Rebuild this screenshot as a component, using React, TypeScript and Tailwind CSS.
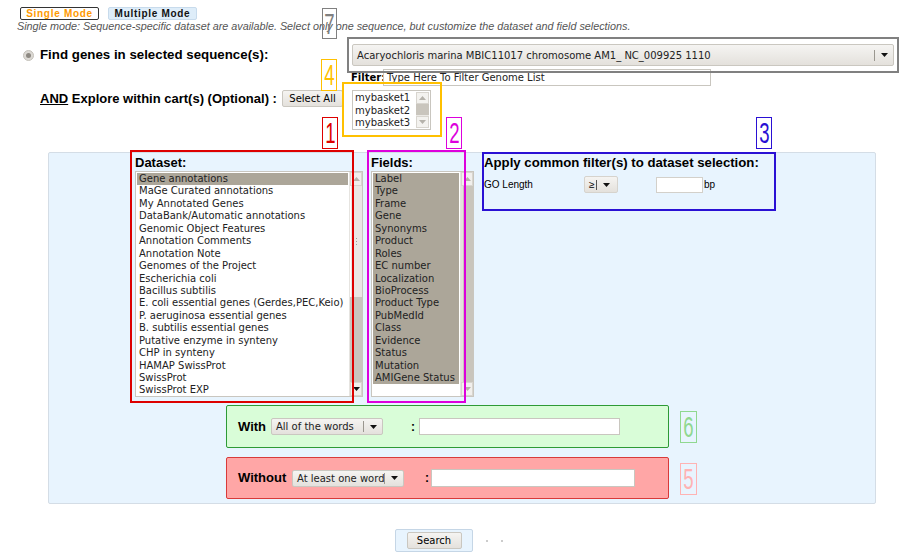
import React from 'react';

const datasets = [
    'Gene annotations',
    'MaGe Curated annotations',
    'My Annotated Genes',
    'DataBank/Automatic annotations',
    'Genomic Object Features',
    'Annotation Comments',
    'Annotation Note',
    'Genomes of the Project',
    'Escherichia coli',
    'Bacillus subtilis',
    'E. coli essential genes (Gerdes,PEC,Keio)',
    'P. aeruginosa essential genes',
    'B. subtilis essential genes',
    'Putative enzyme in synteny',
    'CHP in synteny',
    'HAMAP SwissProt',
    'SwissProt',
    'SwissProt EXP',
];

const fields = [
    'Label', 'Type', 'Frame', 'Gene', 'Synonyms', 'Product', 'Roles', 'EC number', 'Localization',
    'BioProcess', 'Product Type', 'PubMedId', 'Class', 'Evidence', 'Status', 'Mutation', 'AMIGene Status',
];

const DownArrow = ({ light = false }: { light?: boolean }) => (
    <svg width="7" height="4" viewBox="0 0 7 4">
        <polygon points="0,0 7,0 3.5,4" fill={light ? '#b5b2ab' : '#111'} />
    </svg>
);

const UpArrow = ({ light = false }: { light?: boolean }) => (
    <svg width="7" height="4" viewBox="0 0 7 4">
        <polygon points="0,4 7,4 3.5,0" fill={light ? '#b5b2ab' : '#111'} />
    </svg>
);

// grey "combo" used for the drop downs
const Combo = ({ text, className }: { text: string; className: string }) => (
    <div className={`flex items-center border border-[#cac7c0] bg-gradient-to-b from-[#f5f4f2] to-[#e4e1dc] rounded-[2px] font-['DejaVu_Sans',sans-serif] text-[10px] text-[#222] ${className}`}>
        <span className="flex-1 pl-[4px] whitespace-nowrap overflow-hidden">{text}</span>
        <span className="w-px h-[11px] bg-[#9a978f]" />
        <span className="w-[18px] flex justify-center"><DownArrow /></span>
    </div>
);

// annotation frame with number
const Tag = ({ n, className }: { n: string; className: string }) => (
    <div className={`absolute flex items-center justify-center border font-['Liberation_Sans',Arial,sans-serif] text-[30px] leading-none ${className}`}>
        <span className="scale-x-[0.62] inline-block">{n}</span>
    </div>
);

export default function App() {
    return (
        <div className="relative w-[900px] h-[560px] overflow-hidden bg-white font-['Liberation_Sans',Arial,sans-serif] text-black">
            {/* mode switch */}
            <div className="flex gap-[9px] pt-[7px] pl-[20px]">
                <div className="h-[13px] w-[79px] flex items-center justify-center border border-[#333] rounded-[2px] bg-white text-[10px] font-bold tracking-[0.7px] text-[#ff9900]">
                    Single Mode
                </div>
                <div className="h-[13px] w-[89px] flex items-center justify-center border border-[#c8dbec] rounded-[2px] bg-[#deedf9] text-[10px] font-bold tracking-[0.7px] text-[#111]">
                    Multiple Mode
                </div>
            </div>
            <div className="h-[12px] leading-[12px] pl-[17px] text-[10.8px] italic text-[#555] whitespace-nowrap">
                Single mode: Sequence-specific dataset are available. Select only one sequence, but customize the dataset and field selections.
            </div>

            {/* sequence */}
            <div className="flex mt-[12px] h-[22px]">
                <div className="w-[352px] flex items-center pl-[23px] gap-[6px]">
                    <span className="w-[11px] h-[11px] rounded-full bg-[#dcd9d4] border border-[#c4c1ba] flex items-center justify-center">
                        <span className="w-[5px] h-[5px] rounded-full bg-[#8d8982]" />
                    </span>
                    <span className="text-[13.3px] font-bold">Find genes in selected sequence(s):</span>
                </div>
                <Combo text="Acaryochloris marina MBIC11017 chromosome AM1_ NC_009925 1110" className="w-[542px] h-[22px]" />
            </div>
            <div className="flex items-center mt-[3px] h-[17px] pl-[351px] font-['DejaVu_Sans',sans-serif] text-[10px]">
                <span className="font-bold w-[32px]">Filter:</span>
                <div className="w-[328px] h-[17px] border border-[#c9c6bf] bg-white flex items-center pl-[3px] text-[#222]">
                    Type Here To Filter Genome List
                </div>
            </div>

            {/* carts */}
            <div className="flex mt-[4px] h-[40px]">
                <div className="w-[343px] flex items-start pl-[40px]">
                    <span className="flex-1 text-[13px] font-bold leading-[17px]">
                        <span className="underline">AND</span> Explore within cart(s) (Optional) :
                    </span>
                    <div className="w-[61px] h-[17px] border border-[#cac7c0] bg-gradient-to-b from-[#f5f4f2] to-[#e4e1dc] rounded-[2px] flex items-center justify-center font-['DejaVu_Sans',sans-serif] text-[10px]">
                        Select All
                    </div>
                </div>
                <div className="ml-[9px] w-[79px] h-[40px] border border-[#c9c6bf] bg-white flex font-['DejaVu_Sans',sans-serif] text-[10px] text-[#222]">
                    <div className="flex-1 pl-[2px] pt-[1px] leading-[12.5px]">
                        <div>mybasket1</div>
                        <div>mybasket2</div>
                        <div>mybasket3</div>
                    </div>
                    <div className="w-[13px] my-[1px] mr-px flex flex-col bg-[#ebe9e5]">
                        <div className="h-[12px] flex items-center justify-center border border-[#d8d5cf] bg-[#f3f2ef]"><UpArrow light /></div>
                        <div className="h-[11px] bg-[#c9c5bd]" />
                        <div className="flex-1" />
                        <div className="h-[12px] flex items-center justify-center border border-[#d8d5cf] bg-[#f3f2ef]"><DownArrow light /></div>
                    </div>
                </div>
            </div>

            {/* main panel */}
            <div className="mt-[22px] ml-[48px] w-[828px] h-[352px] border border-[#d4dde6] rounded-[2px] bg-[#e8f4fe]">
                <div className="flex pl-[86px] pt-[2px]">
                    {/* dataset */}
                    <div className="w-[228px]">
                        <div className="h-[16px] leading-[16px] text-[13px] font-bold">Dataset:</div>
                        <div className="h-[226px] border border-[#c9c6bf] bg-white flex font-['DejaVu_Sans',sans-serif] text-[10px] text-[#222]">
                            <div className="flex-1 p-px">
                                {datasets.map((d, i) => (
                                    <div key={d} className={`h-[12.45px] leading-[12.45px] pl-[2px] whitespace-nowrap ${i === 0 ? 'bg-[#aca699]' : ''}`}>{d}</div>
                                ))}
                            </div>
                            <div className="w-[13px] flex flex-col bg-[#c9c5bd] border-l border-[#e6e4e0]">
                                <div className="h-[14px] flex items-center justify-center border border-[#d8d5cf] bg-[#f1efec]"><UpArrow light /></div>
                                <div className="h-[111px] bg-[#eae8e4] border-l border-white flex items-center justify-center">
                                    <div className="flex flex-col gap-[2px]">
                                        <span className="w-px h-px bg-[#a09d96]" />
                                        <span className="w-px h-px bg-[#a09d96]" />
                                        <span className="w-px h-px bg-[#a09d96]" />
                                    </div>
                                </div>
                                <div className="flex-1" />
                                <div className="h-[14px] flex items-center justify-center border border-[#d8d5cf] bg-[#f1efec]"><DownArrow /></div>
                            </div>
                        </div>
                    </div>

                    {/* fields */}
                    <div className="w-[103px] ml-[8px]">
                        <div className="h-[16px] leading-[16px] text-[13px] font-bold">Fields:</div>
                        <div className="h-[226px] border border-[#c9c6bf] bg-white flex font-['DejaVu_Sans',sans-serif] text-[10px] text-[#222]">
                            <div className="flex-1 p-px">
                                {fields.map((f) => (
                                    <div key={f} className="h-[12.45px] leading-[12.45px] pl-[2px] whitespace-nowrap bg-[#aca699]">{f}</div>
                                ))}
                            </div>
                            <div className="w-[13px] flex flex-col bg-[#c9c5bd] border-l border-[#e6e4e0]">
                                <div className="h-[14px] flex items-center justify-center border border-[#d8d5cf] bg-[#f1efec]"><UpArrow light /></div>
                                <div className="flex-1 border-l-2 border-[#e4e1dc]" />
                                <div className="h-[14px] flex items-center justify-center border border-[#d8d5cf] bg-[#f1efec]"><DownArrow light /></div>
                            </div>
                        </div>
                    </div>

                    {/* common filters */}
                    <div className="ml-[10px]">
                        <div className="h-[16px] leading-[16px] text-[13.2px] font-bold">Apply common filter(s) to dataset selection:</div>
                        <div className="flex items-center mt-[5px] h-[17px] text-[10px]">
                            <span className="w-[100px]">GO Length</span>
                            <div className="w-[34px] h-[17px] flex items-center border border-[#d6d3cd] bg-gradient-to-b from-[#f5f4f2] to-[#e4e1dc] rounded-[2px] text-[10px]">
                                <span className="pl-[4px] pr-[1px]">≥</span>
                                <span className="w-px h-[10px] bg-[#555]" />
                                <span className="flex-1 flex justify-center"><DownArrow /></span>
                            </div>
                            <div className="ml-[38px] w-[47px] h-[16px] border border-[#d3d0ca] bg-white" />
                            <span className="ml-px">bp</span>
                        </div>
                    </div>
                </div>

                {/* with */}
                <div className="mt-[8px] ml-[177px] w-[443px] h-[43px] border border-[#2e9a36] rounded-[2px] bg-[#d9fdd8] flex items-center pl-[11px]">
                    <span className="w-[33px] text-[13px] font-bold">With</span>
                    <Combo text="All of the words" className="w-[112px] h-[17px]" />
                    <span className="ml-[28px] w-[8px] text-[12px] font-bold">:</span>
                    <div className="w-[201px] h-[17px] border border-[#c9c6bf] bg-white" />
                </div>

                {/* without */}
                <div className="mt-[9px] ml-[177px] w-[443px] h-[42px] border border-[#d83a3a] rounded-[2px] bg-[#ffa6a6] flex items-center pl-[11px]">
                    <span className="w-[54px] text-[13px] font-bold">Without</span>
                    <Combo text="At least one word" className="w-[112px] h-[17px]" />
                    <span className="ml-[21px] w-[6px] text-[12px] font-bold">:</span>
                    <div className="w-[204px] h-[18px] border border-[#c9c6bf] bg-white" />
                </div>
            </div>

            {/* search */}
            <div className="flex items-center mt-[25px] ml-[395px]">
                <div className="w-[78px] h-[23px] border border-[#c5d6e6] rounded-[2px] bg-[#e8f4fe] flex items-center justify-center">
                    <div className="w-[55px] h-[17px] border border-[#cac7c0] bg-gradient-to-b from-[#f5f4f2] to-[#e4e1dc] rounded-[2px] flex items-center justify-center font-['DejaVu_Sans',sans-serif] text-[10px]">
                        Search
                    </div>
                </div>
                <span className="ml-[13px] w-[2px] h-[2px] bg-[#ccc]" />
                <span className="ml-[13px] w-[2px] h-[2px] bg-[#ccc]" />
            </div>

            {/* annotations drawn over the screen */}
            <div className="absolute left-[347px] top-[37px] w-[552px] h-[36px] border-2 border-[#808080]" />
            <div className="absolute left-[342px] top-[82px] w-[100px] h-[55px] border-2 border-[#ffc000]" />
            <div className="absolute left-[130px] top-[150px] w-[224px] h-[253px] border-2 border-[#dd0000]" />
            <div className="absolute left-[367px] top-[150px] w-[99px] h-[253px] border-2 border-[#dd00dd]" />
            <div className="absolute left-[482px] top-[152px] w-[294px] h-[59px] border-2 border-[#2a10d4]" />

            <Tag n="7" className="left-[322px] top-[8px] w-[15px] h-[31px] border-[#808080] text-[#808080]" />
            <Tag n="4" className="left-[321px] top-[59px] w-[16px] h-[32px] border-[#ffc000] text-[#ffc000]" />
            <Tag n="1" className="left-[322px] top-[117px] w-[16px] h-[32px] border-[#dd0000] text-[#dd0000]" />
            <Tag n="2" className="left-[446px] top-[117px] w-[16px] h-[32px] border-[#dd00dd] text-[#dd00dd]" />
            <Tag n="3" className="left-[756px] top-[117px] w-[16px] h-[32px] border-[#2a10d4] text-[#2a10d4]" />
            <Tag n="6" className="left-[680px] top-[411px] w-[17px] h-[32px] border-[#90d890] text-[#90d890]" />
            <Tag n="5" className="left-[680px] top-[463px] w-[17px] h-[32px] border-[#ffb3b3] text-[#ffb3b3]" />
        </div>
    );
}
